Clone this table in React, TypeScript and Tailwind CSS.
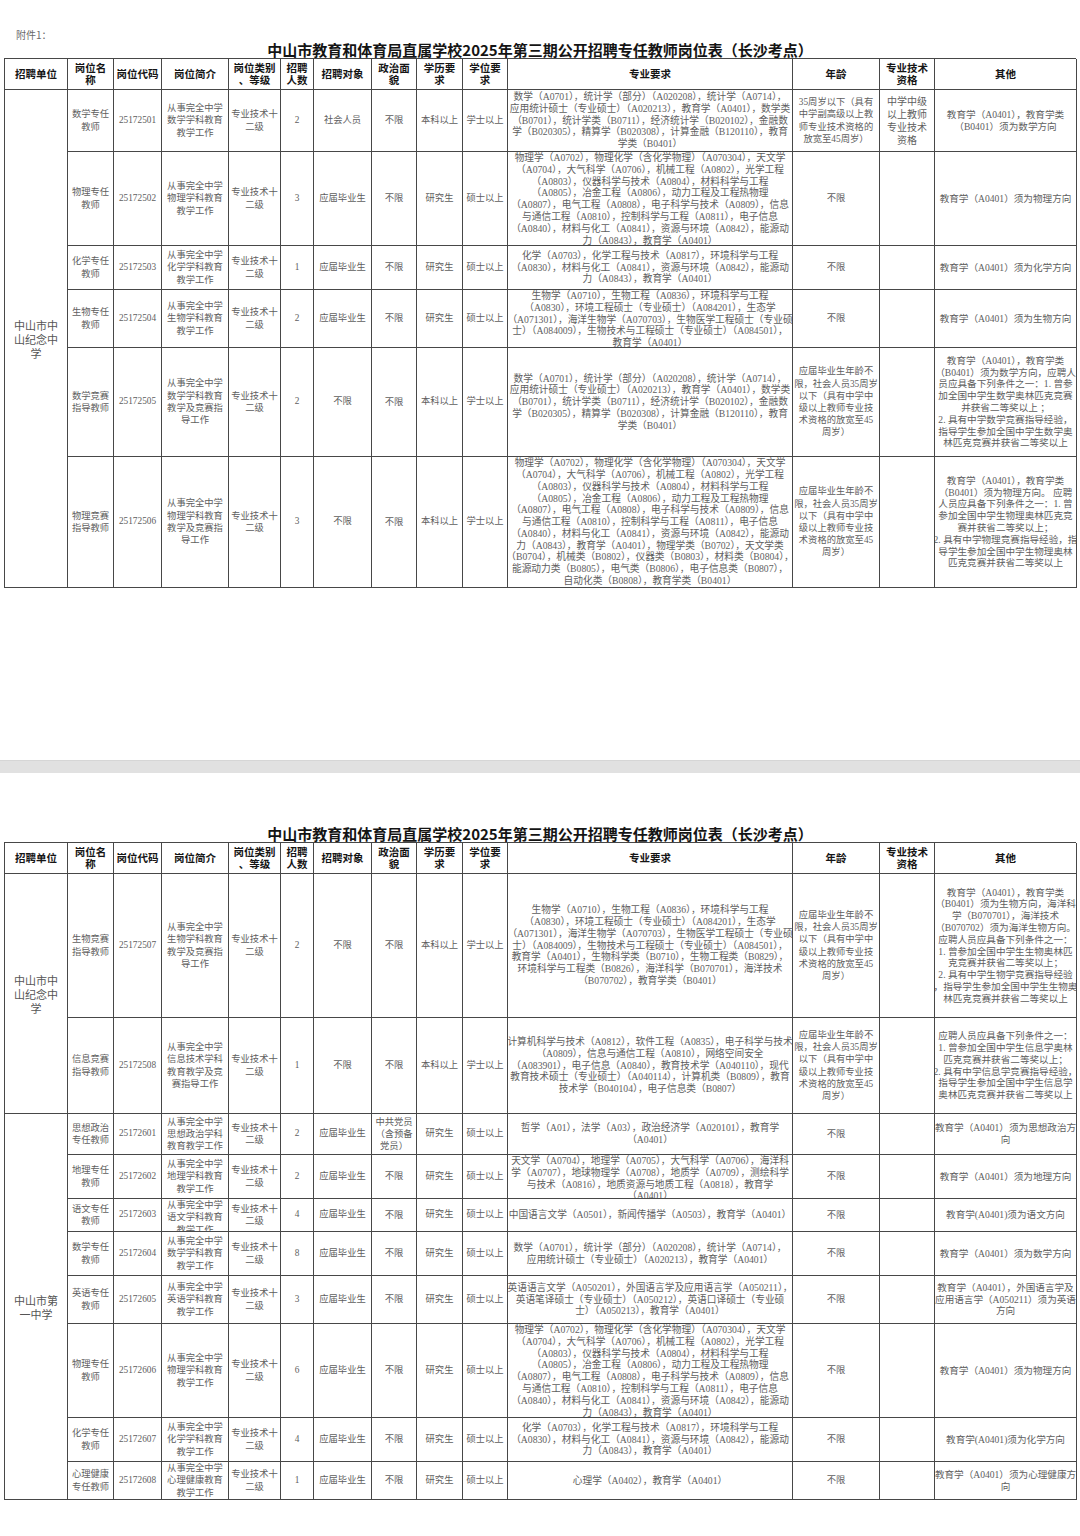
import React from 'react';

type Post = {
  name: string[];
  code: string;
  intro: string[];
  count: string;
  target?: string;
  politics?: string[];
  edu?: string;
  degree?: string;
  major: string[];
  age: string[];
  cert?: string[];
  other: string[];
};

type Group = {
  unit: string[];
  span: string;
  posts: Post[];
};

const TITLE = '中山市教育和体育局直属学校2025年第三期公开招聘专任教师岗位表（长沙考点）';

const HEADERS: string[][] = [
  ['招聘单位'],
  ['岗位名', '称'],
  ['岗位代码'],
  ['岗位简介'],
  ['岗位类别', '、等级'],
  ['招聘', '人数'],
  ['招聘对象'],
  ['政治面', '貌'],
  ['学历要', '求'],
  ['学位要', '求'],
  ['专业要求'],
  ['年龄'],
  ['专业技术', '资格'],
  ['其他'],
];

const LEVEL = ['专业技术十', '二级'];

const teach = (s: string) => ['从事完全中学', `${s}学科教育`, '教学工作'];
const coach = (s: string) => ['从事完全中学', `${s}学科教育`, '教学及竞赛指', '导工作'];

const MATH = [
  '数学（A0701），统计学（部分）（A020208），统计学（A0714），',
  '应用统计硕士（专业硕士）（A020213），教育学（A0401），数学类',
  '（B0701），统计学类（B0711），经济统计学（B020102），金融数',
  '学（B020305），精算学（B020308），计算金融（B120110），教育',
  '学类（B0401）',
];

const PHYS = [
  '物理学（A0702），物理化学（含化学物理）（A070304），天文学',
  '（A0704），大气科学（A0706），机械工程（A0802），光学工程',
  '（A0803），仪器科学与技术（A0804），材料科学与工程',
  '（A0805），冶金工程（A0806），动力工程及工程热物理',
  '（A0807），电气工程（A0808），电子科学与技术（A0809），信息',
  '与通信工程（A0810），控制科学与工程（A0811），电子信息',
  '（A0840），材料与化工（A0841），资源与环境（A0842），能源动',
];

const CHEM = [
  '化学（A0703），化学工程与技术（A0817），环境科学与工程',
  '（A0830），材料与化工（A0841），资源与环境（A0842），能源动',
  '力（A0843），教育学（A0401）',
];

const BIO = [
  '生物学（A0710），生物工程（A0836），环境科学与工程',
  '（A0830），环境工程硕士（专业硕士）（A084201），生态学',
  '（A071301），海洋生物学（A070703），生物医学工程硕士（专业硕',
  '士）（A084009），生物技术与工程硕士（专业硕士）（A084501），',
  '教育学（A0401）',
];

const OPEN_AGE = [
  '应届毕业生年龄不',
  '限，社会人员35周岁',
  '以下（具有中学中',
  '级以上教师专业技',
  '术资格的放宽至45',
  '周岁）',
];

const page1: Group[] = [
  {
    unit: ['中山市中', '山纪念中', '学'],
    span: 'row-span-6',
    posts: [
      {
        name: ['数学专任', '教师'],
        code: '25172501',
        intro: teach('数学'),
        count: '2',
        target: '社会人员',
        edu: '本科以上',
        degree: '学士以上',
        major: MATH,
        age: ['35周岁以下（具有', '中学副高级以上教', '师专业技术资格的', '放宽至45周岁）'],
        cert: ['中学中级', '以上教师', '专业技术', '资格'],
        other: ['教育学（A0401），教育学类', '（B0401）须为数学方向'],
      },
      {
        name: ['物理专任', '教师'],
        code: '25172502',
        intro: teach('物理'),
        count: '3',
        major: [...PHYS, '力（A0843），教育学（A0401）'],
        age: ['不限'],
        other: ['教育学（A0401）须为物理方向'],
      },
      {
        name: ['化学专任', '教师'],
        code: '25172503',
        intro: teach('化学'),
        count: '1',
        major: CHEM,
        age: ['不限'],
        other: ['教育学（A0401）须为化学方向'],
      },
      {
        name: ['生物专任', '教师'],
        code: '25172504',
        intro: teach('生物'),
        count: '2',
        major: BIO,
        age: ['不限'],
        other: ['教育学（A0401）须为生物方向'],
      },
      {
        name: ['数学竞赛', '指导教师'],
        code: '25172505',
        intro: coach('数学'),
        count: '2',
        target: '不限',
        edu: '本科以上',
        degree: '学士以上',
        major: MATH,
        age: OPEN_AGE,
        other: [
          '教育学（A0401），教育学类',
          '（B0401）须为数学方向，应聘人',
          '员应具备下列条件之一：1. 曾参',
          '加全国中学生数学奥林匹克竞赛',
          '并获省二等奖以上 ；',
          '2. 具有中学数学竞赛指导经验，',
          '指导学生参加全国中学生数学奥',
          '林匹克竞赛并获省二等奖以上',
        ],
      },
      {
        name: ['物理竞赛', '指导教师'],
        code: '25172506',
        intro: coach('物理'),
        count: '3',
        target: '不限',
        edu: '本科以上',
        degree: '学士以上',
        major: [
          ...PHYS,
          '力（A0843），教育学（A0401），物理学类（B0702），天文学类',
          '（B0704），机械类（B0802），仪器类（B0803），材料类（B0804），',
          '能源动力类（B0805），电气类（B0806），电子信息类（B0807），',
          '自动化类（B0808），教育学类（B0401）',
        ],
        age: OPEN_AGE,
        other: [
          '教育学（A0401），教育学类',
          '（B0401）须为物理方向。 应聘',
          '人员应具备下列条件之一：1. 曾',
          '参加全国中学生物理奥林匹克竞',
          '赛并获省二等奖以上；',
          '2. 具有中学物理竞赛指导经验，指',
          '导学生参加全国中学生物理奥林',
          '匹克竞赛并获省二等奖以上',
        ],
      },
    ],
  },
];

const page2: Group[] = [
  {
    unit: ['中山市中', '山纪念中', '学'],
    span: 'row-span-2',
    posts: [
      {
        name: ['生物竞赛', '指导教师'],
        code: '25172507',
        intro: coach('生物'),
        count: '2',
        target: '不限',
        edu: '本科以上',
        degree: '学士以上',
        major: [
          ...BIO.slice(0, 4),
          '教育学（A0401），生物科学类（B0710），生物工程类（B0829），',
          '环境科学与工程类（B0826），海洋科学（B070701），海洋技术',
          '（B070702），教育学类（B0401）',
        ],
        age: OPEN_AGE,
        other: [
          '教育学（A0401），教育学类',
          '（B0401）须为生物方向，海洋科',
          '学（B070701），海洋技术',
          '（B070702）须为海洋生物方向。',
          '应聘人员应具备下列条件之一：',
          '1. 曾参加全国中学生生物奥林匹',
          '克竞赛并获省二等奖以上；',
          '2. 具有中学生物学竞赛指导经验',
          '，指导学生参加全国中学生生物奥',
          '林匹克竞赛并获省二等奖以上',
        ],
      },
      {
        name: ['信息竞赛', '指导教师'],
        code: '25172508',
        intro: ['从事完全中学', '信息技术学科', '教育教学及竞', '赛指导工作'],
        count: '1',
        target: '不限',
        edu: '本科以上',
        degree: '学士以上',
        major: [
          '计算机科学与技术（A0812），软件工程（A0835），电子科学与技术',
          '（A0809），信息与通信工程（A0810），网络空间安全',
          '（A083901），电子信息（A0840），教育技术学（A040110），现代',
          '教育技术硕士（专业硕士）（A040114），计算机类（B0809），教育',
          '技术学（B040104），电子信息类（B0807）',
        ],
        age: OPEN_AGE,
        other: [
          '应聘人员应具备下列条件之一：',
          '1. 曾参加全国中学生信息学奥林',
          '匹克竞赛并获省二等奖以上；',
          '2. 具有中学信息学竞赛指导经验，',
          '指导学生参加全国中学生信息学',
          '奥林匹克竞赛并获省二等奖以上',
        ],
      },
    ],
  },
  {
    unit: ['中山市第', '一中学'],
    span: 'row-span-8',
    posts: [
      {
        name: ['思想政治', '专任教师'],
        code: '25172601',
        intro: ['从事完全中学', '思想政治学科', '教育教学工作'],
        count: '2',
        politics: ['中共党员', '（含预备', '党员）'],
        major: ['哲学（A01），法学（A03），政治经济学（A020101），教育学', '（A0401）'],
        age: ['不限'],
        other: ['教育学（A0401）须为思想政治方', '向'],
      },
      {
        name: ['地理专任', '教师'],
        code: '25172602',
        intro: teach('地理'),
        count: '2',
        major: [
          '天文学（A0704），地理学（A0705），大气科学（A0706），海洋科',
          '学（A0707），地球物理学（A0708），地质学（A0709），测绘科学',
          '与技术（A0816），地质资源与地质工程（A0818），教育学',
          '（A0401）',
        ],
        age: ['不限'],
        other: ['教育学（A0401）须为地理方向'],
      },
      {
        name: ['语文专任', '教师'],
        code: '25172603',
        intro: teach('语文'),
        count: '4',
        major: ['中国语言文学（A0501），新闻传播学（A0503），教育学（A0401）'],
        age: ['不限'],
        other: ['教育学(A0401)须为语文方向'],
      },
      {
        name: ['数学专任', '教师'],
        code: '25172604',
        intro: teach('数学'),
        count: '8',
        major: [MATH[0], '应用统计硕士（专业硕士）（A020213），教育学（A0401）'],
        age: ['不限'],
        other: ['教育学（A0401）须为数学方向'],
      },
      {
        name: ['英语专任', '教师'],
        code: '25172605',
        intro: teach('英语'),
        count: '3',
        major: [
          '英语语言文学（A050201），外国语言学及应用语言学（A050211），',
          '英语笔译硕士（专业硕士）（A050212），英语口译硕士（专业硕',
          '士）（A050213），教育学（A0401）',
        ],
        age: ['不限'],
        other: ['教育学（A0401），外国语言学及', '应用语言学（A050211）须为英语', '方向'],
      },
      {
        name: ['物理专任', '教师'],
        code: '25172606',
        intro: teach('物理'),
        count: '6',
        major: [...PHYS, '力（A0843），教育学（A0401）'],
        age: ['不限'],
        other: ['教育学（A0401）须为物理方向'],
      },
      {
        name: ['化学专任', '教师'],
        code: '25172607',
        intro: teach('化学'),
        count: '4',
        major: CHEM,
        age: ['不限'],
        other: ['教育学(A0401)须为化学方向'],
      },
      {
        name: ['心理健康', '专任教师'],
        code: '25172608',
        intro: ['从事完全中学', '心理健康教育', '教学工作'],
        count: '1',
        major: ['心理学（A0402），教育学（A0401）'],
        age: ['不限'],
        other: ['教育学（A0401）须为心理健康方', '向'],
      },
    ],
  },
];

const cellBase =
  'border-r-[1.5px] border-b-[1.5px] border-[#474747] flex flex-col items-center [justify-content:safe_center] text-center overflow-hidden';
const bodyText =
  "font-['Liberation_Serif','Noto_Sans_CJK_SC',serif] text-[9.3px] leading-[11.8px] text-[#5e5e5e]";

const Lines = ({ lines }: { lines: string[] }) => (
  <>
    {lines.map((l, i) => (
      <div key={i} className="whitespace-nowrap">
        {l}
      </div>
    ))}
  </>
);

const Cell = ({ lines, className = '' }: { lines: string[]; className?: string }) => (
  <div className={`${cellBase} ${bodyText} ${className}`}>
    <Lines lines={lines} />
  </div>
);

const PostRow = ({ p }: { p: Post }) => (
  <>
    <Cell lines={p.name} className="leading-[12.3px]" />
    <Cell lines={[p.code]} />
    <Cell lines={p.intro} className="leading-[12.3px]" />
    <Cell lines={LEVEL} className="leading-[12.3px]" />
    <Cell lines={[p.count]} />
    <Cell lines={[p.target ?? '应届毕业生']} />
    <Cell lines={p.politics ?? ['不限']} className="leading-[12.3px]" />
    <Cell lines={[p.edu ?? '研究生']} />
    <Cell lines={[p.degree ?? '硕士以上']} />
    <Cell lines={p.major} className="text-[9.7px] leading-[11.6px]" />
    <Cell lines={p.age} className="leading-[12.2px]" />
    <Cell lines={p.cert ?? []} className="text-[10px] leading-[13px]" />
    <Cell lines={p.other} className="text-[9.6px]" />
  </>
);

const Sheet = ({ groups, rows }: { groups: Group[]; rows: string }) => (
  <div
    className={`grid grid-cols-[63px_46px_48px_67px_52px_33px_58px_45px_46px_45px_285px_87px_55px_142px] ${rows} border-l-[1.5px] border-t-[1.5px] border-[#474747]`}
  >
    {HEADERS.map((h, i) => (
      <div
        key={i}
        className={`${cellBase} font-['Noto_Sans_CJK_SC',sans-serif] font-bold text-[10.5px] leading-[12px] text-[#151515]`}
      >
        <Lines lines={h} />
      </div>
    ))}
    {groups.map((g, gi) => (
      <React.Fragment key={gi}>
        <div className={`${cellBase} ${g.span} font-['Noto_Sans_CJK_SC',sans-serif] text-[11px] leading-[14px] text-[#555]`}>
          <Lines lines={g.unit} />
        </div>
        {g.posts.map((p) => (
          <PostRow key={p.code} p={p} />
        ))}
      </React.Fragment>
    ))}
  </div>
);

const Title = () => (
  <h1 className="h-[16px] text-center font-['Noto_Sans_CJK_SC',sans-serif] text-[15px] font-bold leading-[16px] text-[#141414] whitespace-nowrap">
    {TITLE}
  </h1>
);

export default function App() {
  return (
    <div className="w-[1080px] h-[1536px] overflow-hidden bg-white">
      <section className="h-[760px] px-[4px]">
        <div className="pt-[28px] pl-[12px] h-[42px] font-['Noto_Sans_CJK_SC',sans-serif] text-[10px] leading-[14px] text-[#6a6a6a]">
          附件1：
        </div>
        <Title />
        <Sheet groups={page1} rows="grid-rows-[31px_62px_94px_44px_58px_109px_131px]" />
      </section>
      <div className="h-[13px] bg-[#e1e1e1] border-t border-[#d6d6d6]" />
      <section className="px-[4px] pt-[53px]">
        <Title />
        <Sheet
          groups={page2}
          rows="grid-rows-[31px_144px_96px_41px_44px_33px_44px_48px_94px_44px_38px]"
        />
      </section>
    </div>
  );
}
